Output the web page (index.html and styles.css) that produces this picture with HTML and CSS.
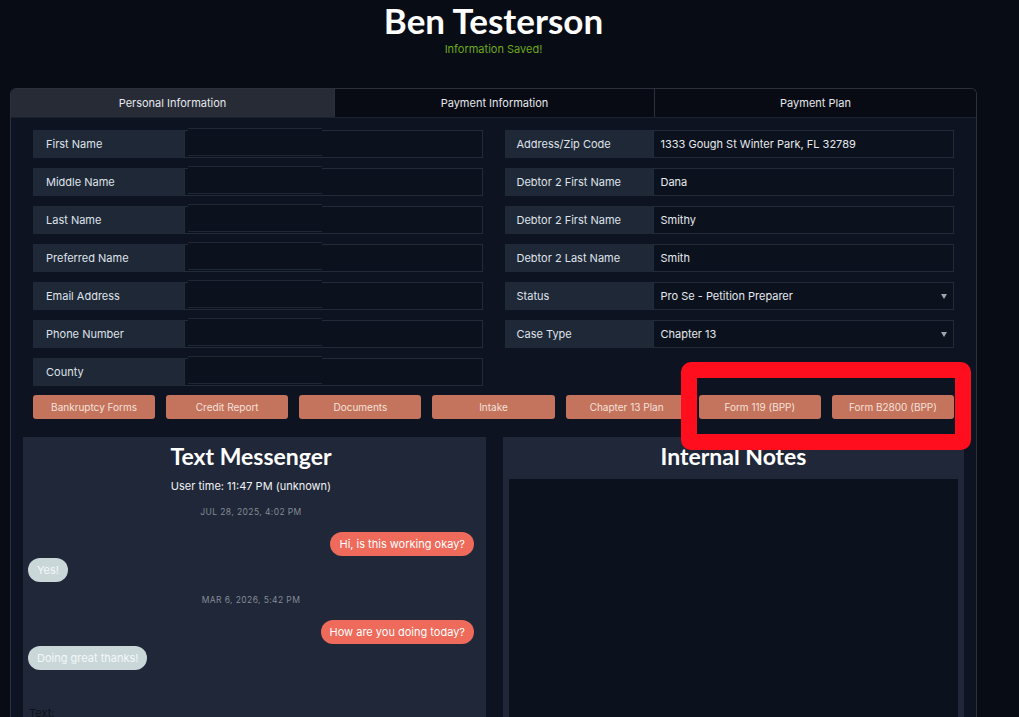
FILE: index.html
```html
<!DOCTYPE html>
<html lang="en">
<head>
<meta charset="utf-8">
<title>Ben Testerson</title>
<link rel="stylesheet" href="styles.css">
</head>
<body>
<header class="page-head">
  <h1 class="client-name">Ben Testerson</h1>
  <p class="saved">Information Saved!</p>
</header>

<main class="card">
  <nav class="tabs">
    <div class="tab is-active">Personal Information</div>
    <div class="tab">Payment Information</div>
    <div class="tab">Payment Plan</div>
  </nav>

  <section class="form-grid">
    <div class="col">
      <div class="field"><span class="field-label">First Name</span><span class="field-input"><span class="ghost"></span></span></div>
      <div class="field"><span class="field-label">Middle Name</span><span class="field-input"><span class="ghost"></span></span></div>
      <div class="field"><span class="field-label">Last Name</span><span class="field-input"><span class="ghost"></span></span></div>
      <div class="field"><span class="field-label">Preferred Name</span><span class="field-input"><span class="ghost"></span></span></div>
      <div class="field"><span class="field-label">Email Address</span><span class="field-input"><span class="ghost"></span></span></div>
      <div class="field"><span class="field-label">Phone Number</span><span class="field-input"><span class="ghost"></span></span></div>
      <div class="field"><span class="field-label">County</span><span class="field-input"><span class="ghost"></span></span></div>
    </div>
    <div class="col">
      <div class="field"><span class="field-label">Address/Zip Code</span><span class="field-input">1333 Gough St Winter Park, FL 32789</span></div>
      <div class="field"><span class="field-label">Debtor 2 First Name</span><span class="field-input">Dana</span></div>
      <div class="field"><span class="field-label">Debtor 2 First Name</span><span class="field-input">Smithy</span></div>
      <div class="field"><span class="field-label">Debtor 2 Last Name</span><span class="field-input">Smith</span></div>
      <div class="field"><span class="field-label">Status</span><span class="field-input select">Pro Se - Petition Preparer<i class="caret"></i></span></div>
      <div class="field"><span class="field-label">Case Type</span><span class="field-input select">Chapter 13<i class="caret"></i></span></div>
    </div>
  </section>

  <div class="actions">
    <button class="btn">Bankruptcy Forms</button>
    <button class="btn">Credit Report</button>
    <button class="btn">Documents</button>
    <button class="btn">Intake</button>
    <button class="btn">Chapter 13 Plan</button>
    <button class="btn">Form 119 (BPP)</button>
    <button class="btn">Form B2800 (BPP)</button>
  </div>

  <section class="lower">
    <div class="panel messenger">
      <h2 class="panel-title">Text Messenger</h2>
      <p class="user-time">User time: 11:47 PM (unknown)</p>
      <div class="stamp">JUL 28, 2025, 4:02 PM</div>
      <div class="msg out">Hi, is this working okay?</div>
      <div class="msg in">Yes!</div>
      <div class="stamp">MAR 6, 2026, 5:42 PM</div>
      <div class="msg out">How are you doing today?</div>
      <div class="msg in">Doing great thanks!</div>
      <div class="compose-label">Text:</div>
    </div>
    <div class="panel notes">
      <h2 class="panel-title">Internal Notes</h2>
      <div class="notes-area"></div>
    </div>
  </section>
</main>

<div class="callout"></div>
</body>
</html>
```

FILE: styles.css
```css
html, body {
  margin: 0;
  padding: 0;
}

body {
  background: #080c14;
  color: #e3e6ec;
  font-family: Inter, "Noto Sans", sans-serif;
  font-size: 11px;
  width: 1019px;
  height: 717px;
  overflow: hidden;
  position: relative;
}

/* ---- page header ---- */
.page-head {
  margin-left: 10px;
  width: 967px;
  height: 88px;
  box-sizing: border-box;
  text-align: center;
}

.client-name {
  margin: 0;
  font-family: Lato, "Noto Sans", sans-serif;
  font-weight: 700;
  font-size: 35px;
  line-height: 40px;
  color: #ffffff;
}

.saved {
  margin: 2px 0 0;
  font-size: 11px;
  line-height: 14px;
  color: #6ea81f;
}

/* ---- main card ---- */
.card {
  margin-left: 10px;
  width: 967px;
  height: 640px;
  box-sizing: border-box;
  border: 1px solid #2a303c;
  border-bottom: none;
  border-radius: 6px 6px 0 0;
  background: #0d1320;
  overflow: hidden;
}

.tabs {
  display: grid;
  grid-template-columns: 323px 320px 1fr;
  height: 28px;
  border-bottom: 1px solid #1c2330;
}

.tab {
  display: flex;
  align-items: center;
  justify-content: center;
  background: #080b13;
  color: #e6e8ec;
  font-size: 11px;
  border-left: 1px solid #2a303c;
}

.tab.is-active {
  background: #262b36;
  border-left: none;
}

/* ---- form ---- */
.form-grid {
  display: grid;
  grid-template-columns: 1fr 1fr;
  column-gap: 22px;
  padding: 12px 22px 0;
}

.col {
  display: flex;
  flex-direction: column;
  gap: 10px;
}

.field {
  display: flex;
  height: 28px;
}

.field-label {
  flex: 0 0 auto;
  display: flex;
  align-items: center;
  box-sizing: border-box;
  width: 151px;
  padding-left: 13px;
  background: #1f2837;
  color: #dfe3ea;
  font-size: 11px;
}

.col + .col .field-label {
  width: 148px;
  padding-left: 12px;
}

.field-input {
  position: relative;
  flex: 1;
  display: flex;
  align-items: center;
  box-sizing: border-box;
  padding-left: 7px;
  background: #0c121d;
  border: 1px solid #222b39;
  color: #e6e9ee;
  font-size: 11px;
}

.ghost {
  position: absolute;
  left: 3px;
  top: -3px;
  width: 134px;
  height: 28px;
  box-sizing: border-box;
  background: #0c121d;
  border-top: 1px solid #1f2736;
  border-bottom: 1px solid #1f2736;
}

.caret {
  position: absolute;
  right: 6px;
  top: 11px;
  width: 0;
  height: 0;
  border-left: 3px solid transparent;
  border-right: 3px solid transparent;
  border-top: 5px solid #a0a5ad;
}

/* ---- action buttons ---- */
.actions {
  display: grid;
  grid-template-columns: repeat(7, 1fr);
  column-gap: 11px;
  padding: 9px 22px 0;
}

.btn {
  height: 24px;
  border: none;
  border-radius: 3px;
  background: #c4735d;
  color: #f6e2da;
  font-family: Inter, "Noto Sans", sans-serif;
  font-size: 10px;
  padding: 0;
}

/* ---- lower panels ---- */
.lower {
  display: grid;
  grid-template-columns: 463px 461px;
  column-gap: 17px;
  padding: 18px 12px 0;
}

.panel {
  background: #1f2738;
  height: 300px;
}

.panel-title {
  margin: 0;
  padding-top: 6px;
  text-align: center;
  font-family: Lato, "Noto Sans", sans-serif;
  font-weight: 700;
  font-size: 23px;
  line-height: 26px;
  color: #ffffff;
}

.messenger {
  display: flex;
  flex-direction: column;
  padding: 0 12px 0 5px;
}

.user-time {
  margin: 9px 0 0;
  text-align: center;
  font-size: 11px;
  line-height: 16px;
  color: #f0f2f5;
}

.stamp {
  margin-top: 12px;
  text-align: center;
  font-size: 8.5px;
  letter-spacing: 0.4px;
  line-height: 12px;
  color: #858b95;
}

.msg {
  box-sizing: border-box;
  height: 24px;
  display: flex;
  align-items: center;
  padding: 0 9px;
  border-radius: 12px;
  font-size: 11px;
  color: #ffffff;
}

.msg.out {
  align-self: flex-end;
  margin-top: 14px;
  background: #ee6a5a;
}

.msg.in {
  align-self: flex-start;
  margin-top: 2px;
  background: #c9d7d9;
  color: #f4f7f8;
}

.compose-label {
  margin-top: 36px;
  padding-left: 1px;
  font-size: 11px;
  color: #0e1118;
}

.notes {
  padding: 0 6px;
}

.notes-area {
  margin-top: 10px;
  height: 260px;
  background: #0c121d;
}

/* ---- red highlight frame ---- */
.callout {
  position: absolute;
  left: 681px;
  top: 362px;
  width: 290px;
  height: 88px;
  box-sizing: border-box;
  border: 16px solid #ff0e1e;
  border-radius: 10px;
  pointer-events: none;
}
```
